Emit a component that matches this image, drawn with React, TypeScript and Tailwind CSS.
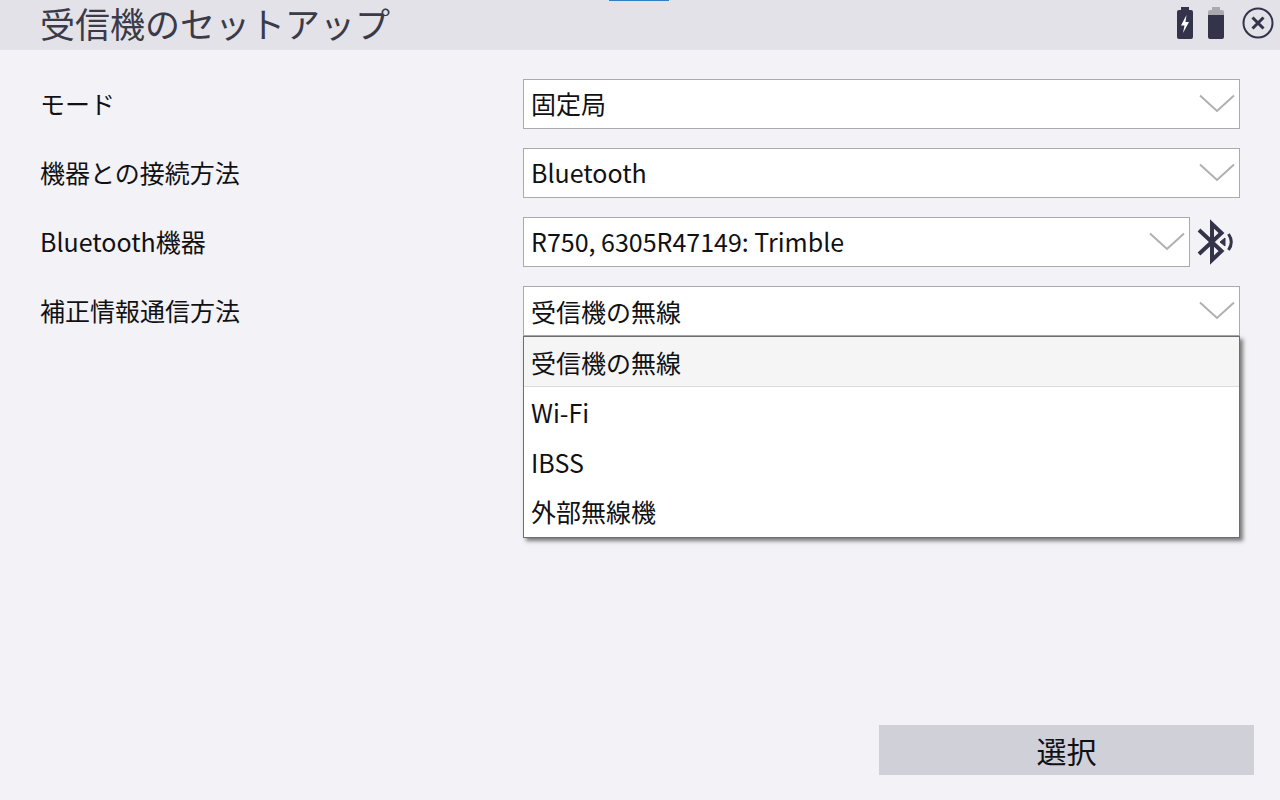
const FONT = "font-['Noto_Sans_CJK_JP','Noto_Sans',sans-serif]";

function Chevron() {
  return (
    <svg width="36" height="20" viewBox="0 0 36 20" fill="none" stroke="#b0b0b4" strokeWidth="2">
      <path d="M1 1.5 L18 17 L35 1.5" />
    </svg>
  );
}

function Select({ value, raised, children }: { value: string; raised?: boolean; children?: React.ReactNode }) {
  return (
    <div className="relative flex-1">
      <div className="flex h-[50px] items-center justify-between border border-[#a9a9ae] bg-white pl-[7px] pr-[4px]">
        <span className={`text-[25px] leading-none text-[#111114] ${raised ? 'pb-[2px]' : ''}`}>{value}</span>
        <Chevron />
      </div>
      {children}
    </div>
  );
}

function Row({ label, children }: { label: string; children: React.ReactNode }) {
  return (
    <div className="flex h-[50px] items-center">
      <div className="w-[483px] pb-[2px] text-[25px] leading-none text-[#111114]">{label}</div>
      <div className="flex flex-1 items-center">{children}</div>
    </div>
  );
}

const options = [
  { label: '受信機の無線', cls: 'border-b border-[#dcdcdc] bg-[#f5f5f5] pt-[1px]' },
  { label: 'Wi-Fi', cls: '' },
  { label: 'IBSS', cls: '' },
  { label: '外部無線機', cls: 'pb-[2px]' },
];

export default function App() {
  return (
    <div className={`relative flex h-screen w-[1280px] flex-col overflow-hidden bg-[#f2f2f7] ${FONT}`}>
      <div className="absolute left-[609px] top-0 h-[1px] w-[60px] bg-[#2f7fc4]" />
      <header className="flex h-[50px] items-center justify-between bg-[#e2e2e8] pb-[4px] pl-[40px] pr-[6px]">
        <h1 className="text-[35px] font-normal leading-[46px] text-[#3a3a48]">受信機のセットアップ</h1>
        <div className="flex items-center">
          <svg width="16" height="32" viewBox="0 0 16 32" className="mr-[15px]">
            <path d="M4 0h8v3h2a2 2 0 0 1 2 2v25a2 2 0 0 1-2 2H2a2 2 0 0 1-2-2V5a2 2 0 0 1 2-2h2z" fill="#33334a" />
            <path d="M9.5 8 L4 18.5 h3.5 L6 26 L12 15 h-3.5 z" fill="#fff" />
          </svg>
          <svg width="16" height="32" viewBox="0 0 16 32" className="mr-[18px]">
            <path d="M4 0h8v3h2a2 2 0 0 1 2 2v3H0V5a2 2 0 0 1 2-2h2z" fill="#a9a9b0" />
            <path d="M0 8h16v22a2 2 0 0 1-2 2H2a2 2 0 0 1-2-2z" fill="#33334a" />
          </svg>
          <svg width="32" height="32" viewBox="0 0 32 32" fill="none" stroke="#33334a">
            <circle cx="16" cy="16" r="14.5" strokeWidth="2" />
            <path d="M10.5 10.5 L21.5 21.5 M21.5 10.5 L10.5 21.5" strokeWidth="3" />
          </svg>
        </div>
      </header>

      <main className="flex flex-1 flex-col gap-[19px] pl-[40px] pr-[40px] pt-[29px]">
        <Row label="モード">
          <Select value="固定局" raised />
        </Row>
        <Row label="機器との接続方法">
          <Select value="Bluetooth" raised />
        </Row>
        <Row label="Bluetooth機器">
          <Select value="R750, 6305R47149: Trimble" raised />
          <svg width="50" height="50" viewBox="0 0 50 50" fill="none" stroke="#33334a" className="shrink-0">
            <path d="M9 13 L31.5 34 L22 43 L22 7 L31.5 16 L9 37" strokeWidth="4" strokeLinejoin="miter" />
            <path d="M35 21 L30 25 L35 29 Z" fill="#33334a" strokeWidth="1" />
            <path d="M38.5 17 C42 22 42 28 38.5 33" strokeWidth="3" />
          </svg>
        </Row>
        <Row label="補正情報通信方法">
          <Select value="受信機の無線">
            <div className="absolute left-0 right-0 top-[50px] z-10 border border-[#6e6e72] bg-white shadow-[3px_3px_4px_rgba(0,0,0,0.5)]">
              {options.map((o) => (
                <div
                  key={o.label}
                  className={`flex h-[50px] items-center pl-[7px] text-[25px] leading-none text-[#111114] ${o.cls}`}
                >
                  {o.label}
                </div>
              ))}
            </div>
          </Select>
        </Row>
      </main>

      <footer className="flex justify-end pb-[25px] pr-[26px]">
        <button className="h-[50px] w-[375px] bg-[#d0d0d9] text-[30px] leading-none text-[#111114]">選択</button>
      </footer>
    </div>
  );
}
